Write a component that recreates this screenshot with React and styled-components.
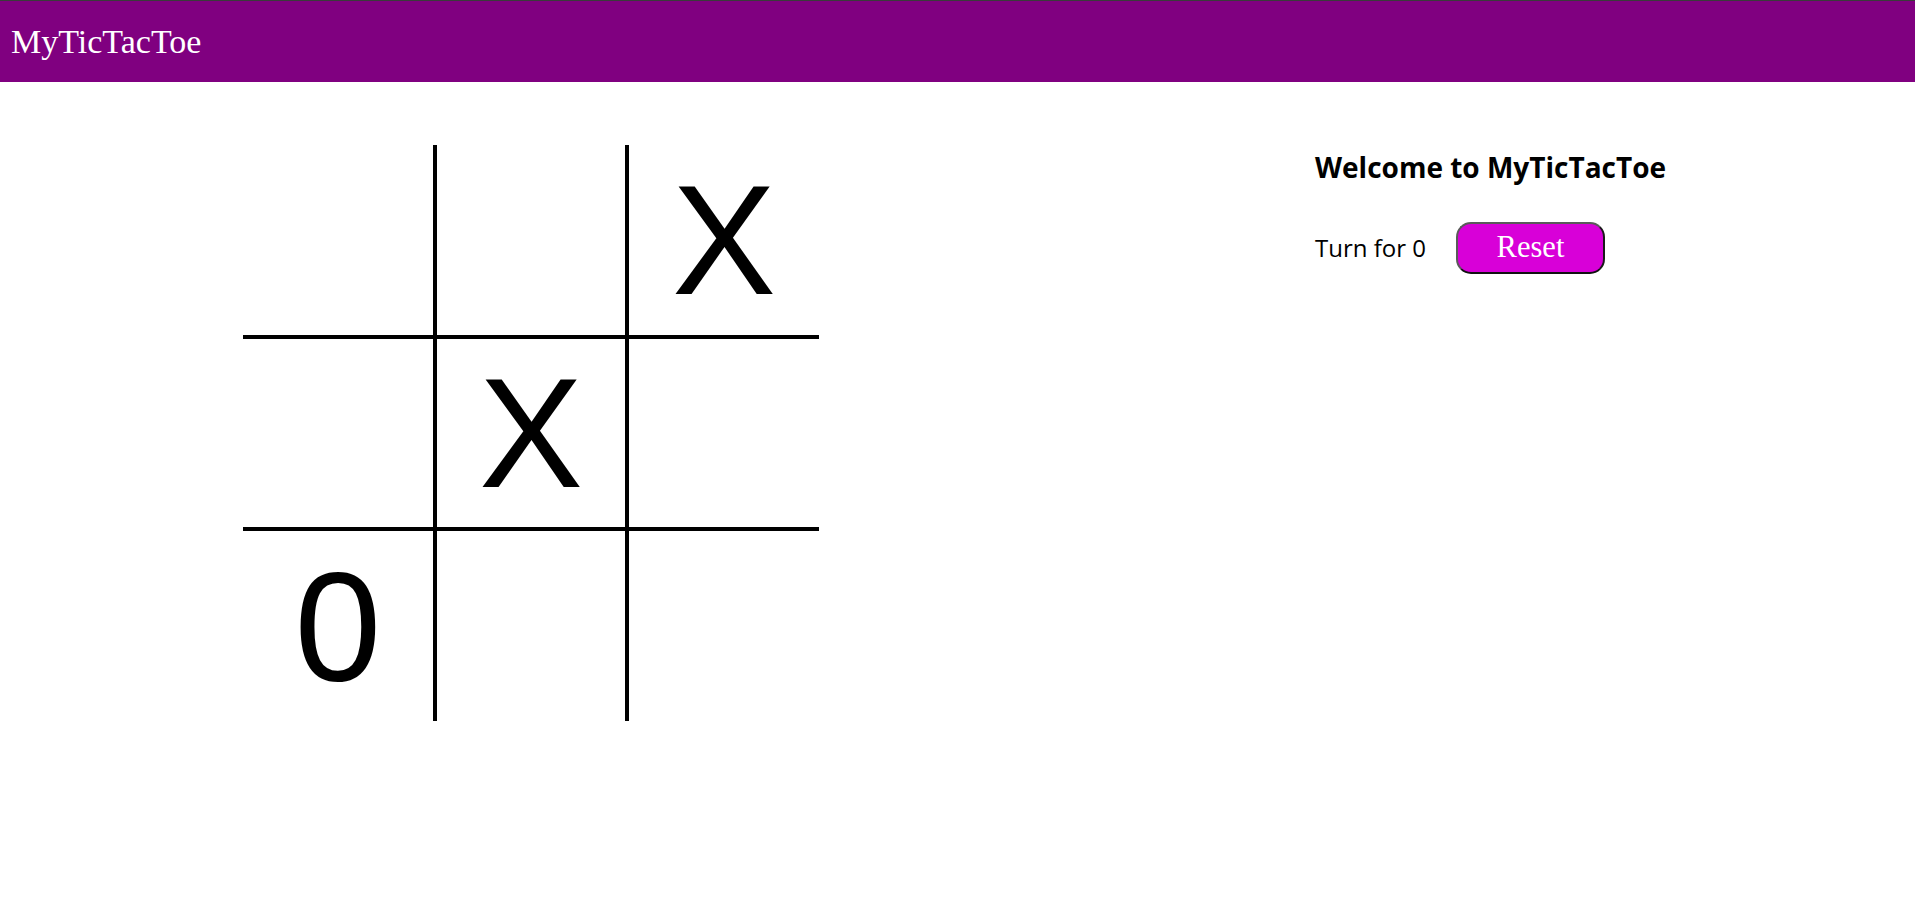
import React, { useState } from "react";
import styled, { createGlobalStyle } from "styled-components";

const GlobalStyle = createGlobalStyle`
  body {
    margin: 0;
    background: #fff;
  }
`;

const Header = styled.header`
  height: 81px;
  border-top: 1px solid #3a3a3a;
  background-color: purple;
  display: flex;
  align-items: center;
  padding-left: 11px;
`;

const Brand = styled.h1`
  margin: 0;
  font-family: "Liberation Serif", serif;
  font-weight: normal;
  font-size: 34px;
  color: #fff;
`;

const Main = styled.main`
  display: flex;
  align-items: flex-start;
  padding: 63px 0 0 243px;
`;

const Board = styled.div`
  display: grid;
  grid-template-columns: repeat(3, 192px);
  grid-template-rows: repeat(3, 192px);
`;

const Cell = styled.div`
  box-sizing: border-box;
  display: flex;
  align-items: center;
  justify-content: center;
  font-family: "Liberation Sans", Arial, sans-serif;
  font-size: 156px;
  line-height: 1;
  color: #000;
  cursor: pointer;
  border-left: ${(p) => (p.$col > 0 ? "2px solid #000" : "none")};
  border-right: ${(p) => (p.$col < 2 ? "2px solid #000" : "none")};
  border-top: ${(p) => (p.$row > 0 ? "2px solid #000" : "none")};
  border-bottom: ${(p) => (p.$row < 2 ? "2px solid #000" : "none")};
`;

const Panel = styled.section`
  margin-left: 496px;
  font-family: "Open Sans", "Noto Sans", sans-serif;
  color: #000;
`;

const Title = styled.h2`
  margin: 0;
  font-size: 28px;
  font-weight: 700;
  line-height: 1.2;
  padding-top: 6px;
`;

const TurnRow = styled.div`
  display: flex;
  align-items: baseline;
  margin-top: 37px;
`;

const Turn = styled.span`
  font-size: 24px;
`;

const ResetButton = styled.button`
  margin-left: 30px;
  width: 149px;
  height: 52px;
  box-sizing: border-box;
  border: 2px solid;
  border-color: #5a5a5a #1a1a1a #111 #5a5a5a;
  border-radius: 15px;
  background-color: #d800d8;
  color: #fff;
  font-family: "Liberation Serif", serif;
  font-size: 30.5px;
  cursor: pointer;
  padding: 0;
`;

const initial = ["", "", "X", "", "X", "", "0", "", ""];

export default function App() {
  const [cells, setCells] = useState(initial);
  const [turn, setTurn] = useState("0");

  const play = (i) => {
    if (cells[i]) return;
    const next = cells.slice();
    next[i] = turn;
    setCells(next);
    setTurn(turn === "X" ? "0" : "X");
  };

  const reset = () => {
    setCells(Array(9).fill(""));
    setTurn("X");
  };

  return (
    <>
      <GlobalStyle />
      <Header>
        <Brand>MyTicTacToe</Brand>
      </Header>
      <Main>
        <Board>
          {cells.map((v, i) => (
            <Cell key={i} $row={Math.floor(i / 3)} $col={i % 3} onClick={() => play(i)}>
              {v}
            </Cell>
          ))}
        </Board>
        <Panel>
          <Title>Welcome to MyTicTacToe</Title>
          <TurnRow>
            <Turn>Turn for {turn}</Turn>
            <ResetButton onClick={reset}>Reset</ResetButton>
          </TurnRow>
        </Panel>
      </Main>
    </>
  );
}
